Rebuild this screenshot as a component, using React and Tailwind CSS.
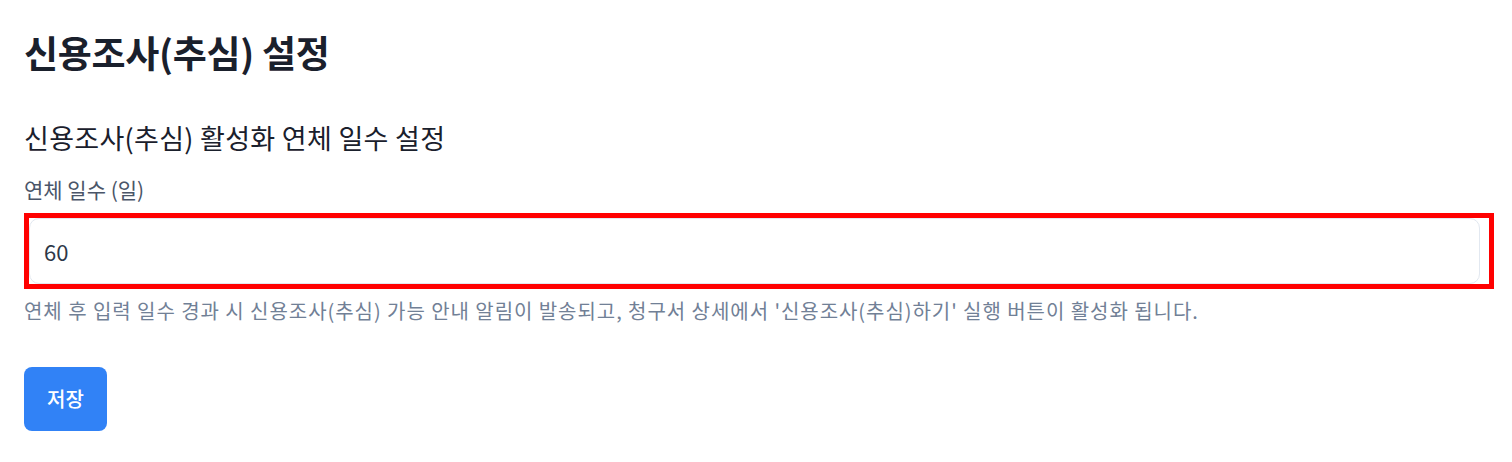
import { useState } from "react";

export default function App() {
  const [days, setDays] = useState("60");

  return (
    <div
      className="min-h-screen bg-white pl-6 pr-[18px] pt-6 text-[#1a202c]"
      style={{ fontFamily: '"Noto Sans CJK KR", "Noto Sans", sans-serif' }}
    >
      <h1 className="text-[37px] font-bold leading-[56px] tracking-[-0.3px]">신용조사(추심) 설정</h1>

      <section className="mt-10">
        <h2 className="text-[27px] font-normal leading-9 tracking-[0.3px]">신용조사(추심) 활성화 연체 일수 설정</h2>

        <label className="mt-[18px] block text-[21px] font-normal leading-[30px] text-[#4a5568]">연체 일수 (일)</label>

        <div className="mt-[9px] border-[5px] border-[#ff0000] pr-[9px]">
          <input
            type="number"
            value={days}
            onChange={(e) => setDays(e.target.value)}
            className="h-[66px] w-full rounded-[10px] border border-[#e2e8f0] bg-white px-[14px] text-[22px] text-[#2d3748] outline-none"
          />
        </div>

        <p className="mt-2 text-[20px] leading-7 tracking-[0.95px] text-[#718096]">
          연체 후 입력 일수 경과 시 신용조사(추심) 가능 안내 알림이 발송되고, 청구서 상세에서 '신용조사(추심)하기' 실행 버튼이 활성화 됩니다.
        </p>

        <button className="mt-[42px] h-16 rounded-lg bg-[#3182f6] px-[23px] text-[20px] font-medium text-white">
          저장
        </button>
      </section>
    </div>
  );
}
